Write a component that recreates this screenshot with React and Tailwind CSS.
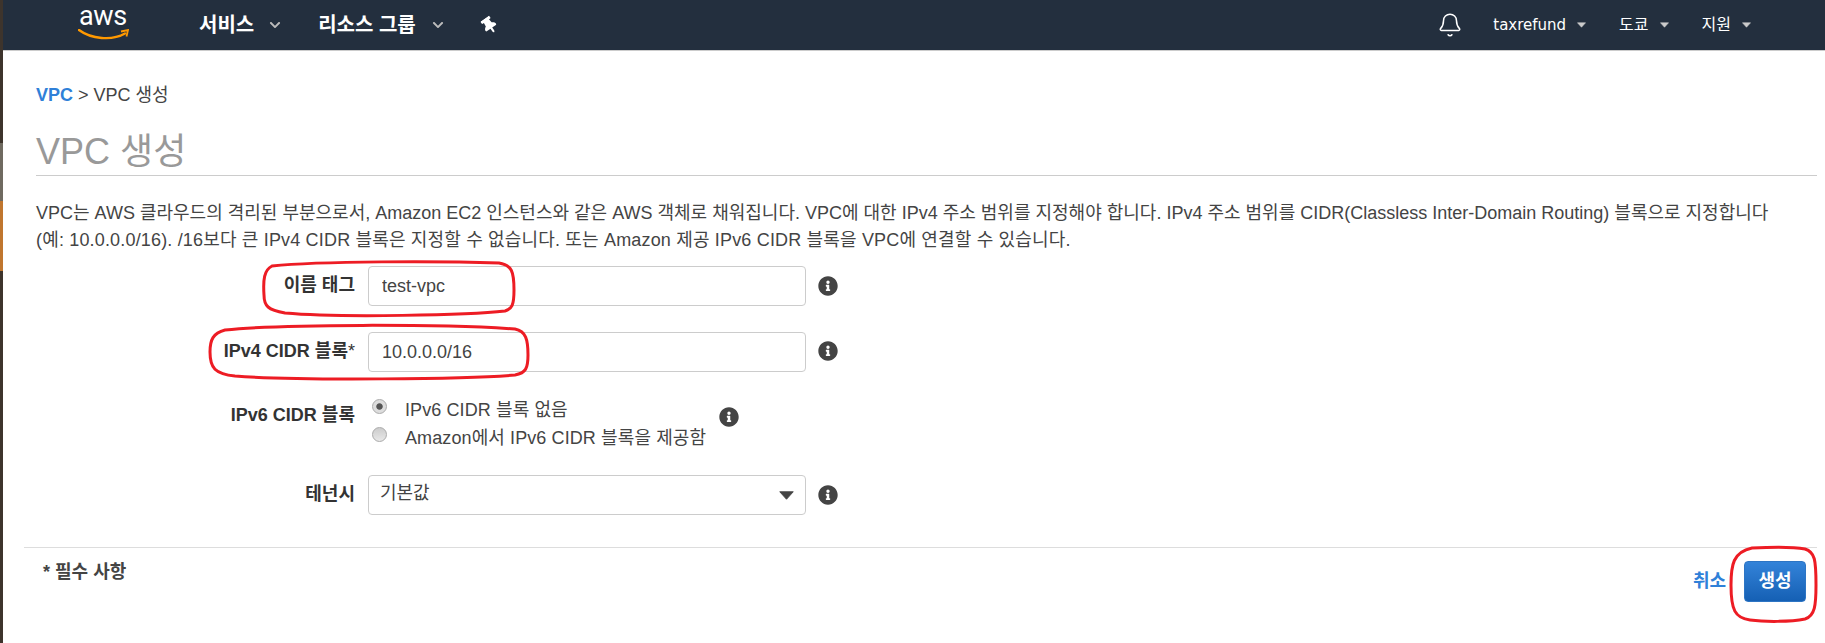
import { FaInfoCircle, FaThumbtack, FaChevronDown } from "react-icons/fa";
import { Bell } from "lucide-react";

const font = "[font-family:'Liberation_Sans','Noto_Sans_CJK_KR',sans-serif]";

function InfoIcon({ className }) {
  return <FaInfoCircle className={`text-[20px] text-[#444] shrink-0 ${className}`} />;
}

function Caret({ className, color = "#ccc" }) {
  return (
    <svg viewBox="0 0 10 6" className={className}>
      <path d="M0.5 0.5H9.5L5 5.5Z" fill={color} stroke={color} strokeLinejoin="round" strokeWidth="0.6" />
    </svg>
  );
}

function AwsLogo() {
  return (
    <div className="relative w-[51px] h-[30px]">
      <span className="absolute left-[1px] top-[-4px] [font-family:'Roboto',sans-serif] text-[27px] leading-[20px] text-white tracking-[-0.4px]">aws</span>
      <svg viewBox="0 0 51 11" className="absolute left-0 bottom-0 w-[51px] h-[11px]">
        <path d="M1 1C13 10 34 12 47 4.5" fill="none" stroke="#f90" strokeWidth="2.4" strokeLinecap="round" />
        <path d="M43 2.5L50 1L48.5 7.5" fill="none" stroke="#f90" strokeWidth="1.8" />
      </svg>
    </div>
  );
}

function NavMenu({ label, className }) {
  return (
    <div className={`flex items-center gap-[11px] text-white ${className}`}>
      <span>{label}</span>
      <Caret className="w-[9px] h-[6px]" />
    </div>
  );
}

function FormRow({ label, children, className }) {
  return (
    <div className={`flex items-start ${className}`}>
      <label className="w-[332px] pr-[13px] pt-[7px] text-right font-bold text-[18px] leading-[24px] text-[#333]">{label}</label>
      {children}
    </div>
  );
}

function TextField({ value }) {
  return (
    <input
      readOnly
      value={value}
      className="w-[438px] h-[40px] px-[13px] border border-[#ccc] rounded-[4px] text-[18px] text-[#444] outline-none"
    />
  );
}

function Radio({ label, checked }) {
  return (
    <div className="flex items-center gap-[18px] h-[28px]">
      <input
        type="radio"
        defaultChecked={checked}
        className="-mt-[7px] -ml-[1px] w-[15px] h-[15px] appearance-none rounded-full border border-[#aaa] bg-gradient-to-b from-[#ccc] to-[#e8e8e8] checked:bg-[radial-gradient(circle,#555_30%,#ddd_40%)]"
      />
      <span className="tracking-[0.1px]">{label}</span>
    </div>
  );
}

// the red hand drawn marks on top of the page
function Marks() {
  return (
    <svg className="absolute left-0 top-0 w-[1825px] h-[643px] pointer-events-none" viewBox="0 0 1825 643" fill="none" stroke="#ed1c24" strokeWidth="3">
      <path d="M272 266C320 261 440 261 499 263C512 265 514 272 514 290C514 305 512 309 505 311C470 315 340 318 285 313C268 310 264 306 264 295C263 280 264 270 272 266Z" />
      <path d="M225 330C280 324 440 324 515 329C526 331 528 340 528 355C528 368 526 373 515 375C470 379 300 381 235 376C215 374 210 368 210 352C210 340 213 333 225 330Z" />
      <path d="M1752 548C1770 547 1795 547 1805 549C1815 552 1816 560 1816 585C1816 605 1815 616 1805 619C1790 622 1765 622 1750 620C1735 618 1731 610 1731 585C1731 565 1733 552 1752 548Z" />
    </svg>
  );
}

export default function App() {
  return (
    <div className={`relative flex w-[1825px] h-[643px] overflow-hidden bg-white ${font}`}>
      {/* desktop showing behind the browser window */}
      <div className="w-[3px] shrink-0 flex flex-col">
        <div className="h-[143px] bg-[#3d342c]" />
        <div className="h-[58px] bg-[#6f6a60]" />
        <div className="h-[70px] bg-[#c0762f]" />
        <div className="flex-1 bg-[#3d342c]" />
      </div>

      <div className="flex-1 min-w-0">
        <header className="h-[51px] bg-[#232f3e] border-b border-[#ccc] flex items-center text-white">
          <div className="ml-[75px] mr-[70px]"><AwsLogo /></div>
          <div className="flex items-center gap-[15px] font-bold text-[20px]">
            <span>서비스</span>
            <FaChevronDown className="text-[12px] text-[#bbb]" />
          </div>
          <div className="flex items-center gap-[16px] font-bold text-[20px] ml-[37px]">
            <span>리소스 그룹</span>
            <FaChevronDown className="text-[12px] text-[#bbb]" />
          </div>
          <FaThumbtack className="ml-[37px] text-[17px] -rotate-[35deg]" />
          <Bell size={26} strokeWidth={1.4} className="ml-auto" />
          <NavMenu label="taxrefund" className="ml-[30px] text-[15px] [font-family:'DejaVu_Sans',sans-serif]" />
          <NavMenu label="도쿄" className="ml-[33px] text-[16px]" />
          <NavMenu label="지원" className="ml-[33px] mr-[74px] text-[16px]" />
        </header>

        <main className="pl-[33px] pr-[8px]">
          <div className="mt-[32px] text-[18px] leading-[24px] text-[#444]">
            <a className="font-bold text-[#2f80d8]">VPC</a> &gt; VPC 생성
          </div>
          <h1 className="mt-[16px] pt-[5px] text-[36px] leading-[47px] text-[#999] border-b border-[#ccc]">VPC 생성</h1>
          <p className="mt-[24px] text-[18px] leading-[27px] text-[#444] whitespace-nowrap">
            VPC는 AWS 클라우드의 격리된 부분으로서, Amazon EC2 인스턴스와 같은 AWS 객체로 채워집니다. VPC에 대한 IPv4 주소 범위를 지정해야 합니다. IPv4 주소 범위를 CIDR(Classless Inter-Domain Routing) 블록으로 지정합니다
            <br />
            <span className="tracking-[0.17px]">(예: 10.0.0.0/16). /16보다 큰 IPv4 CIDR 블록은 지정할 수 없습니다. 또는 Amazon 제공 IPv6 CIDR 블록을 VPC에 연결할 수 있습니다.</span>
          </p>

          <div className="mt-[12px]">
            <FormRow label="이름 태그">
              <TextField value="test-vpc" />
              <InfoIcon className="ml-[12px] mt-[10px]" />
            </FormRow>
            <FormRow label={<>IPv4 CIDR 블록<span className="font-normal">*</span></>} className="mt-[26px]">
              <TextField value="10.0.0.0/16" />
              <InfoIcon className="ml-[12px] mt-[9px]" />
            </FormRow>
            <FormRow label="IPv6 CIDR 블록" className="mt-[24px]">
              <div className="ml-[5px] text-[18px] text-[#444]">
                <Radio label="IPv6 CIDR 블록 없음" checked />
                <Radio label="Amazon에서 IPv6 CIDR 블록을 제공함" />
              </div>
              <InfoIcon className="ml-[13px] mt-[11px]" />
            </FormRow>
            <FormRow label="테넌시" className="mt-[23px]">
              <div className="w-[438px] h-[40px] pl-[11px] pr-[11px] pb-[3px] border border-[#ccc] rounded-[4px] text-[18px] text-[#444] flex items-center justify-between">
                <span>기본값</span>
                <Caret className="w-[15px] h-[9px] mt-[3px]" color="#444" />
              </div>
              <InfoIcon className="ml-[12px] mt-[10px]" />
            </FormRow>
          </div>
        </main>

        <footer className="mt-[32px] ml-[21px] mr-[8px] border-t border-[#ddd] flex justify-between">
          <div className="ml-[19px] mt-[12px] font-bold text-[18px] leading-[24px] text-[#444]">* 필수 사항</div>
          <div className="flex items-start mr-[11px] mt-[13px]">
            <a className="mt-[8px] text-[18px] leading-[24px] font-bold text-[#2f80d8]">취소</a>
            <button className="ml-[18px] w-[62px] h-[41px] rounded-[4px] border border-[#2d75c4] bg-gradient-to-b from-[#3383d9] to-[#1560b4] text-white font-bold text-[18px]">생성</button>
          </div>
        </footer>
      </div>

      <Marks />
    </div>
  );
}
